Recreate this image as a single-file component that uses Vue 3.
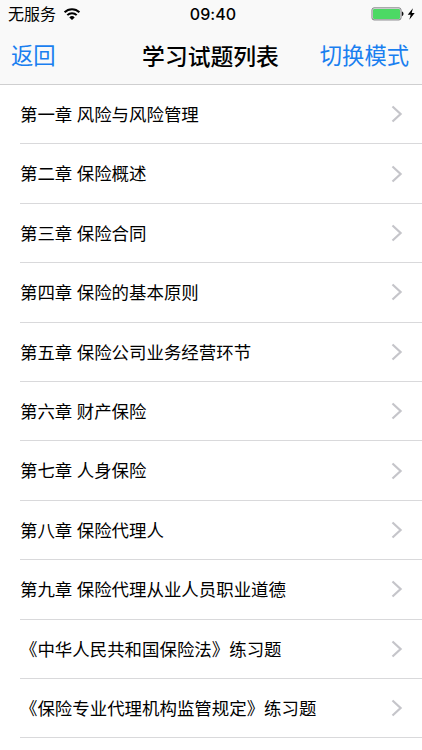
<script setup>
import { ref } from 'vue'

const chapters = ref([
  '第一章 风险与风险管理',
  '第二章 保险概述',
  '第三章 保险合同',
  '第四章 保险的基本原则',
  '第五章 保险公司业务经营环节',
  '第六章 财产保险',
  '第七章 人身保险',
  '第八章 保险代理人',
  '第九章 保险代理从业人员职业道德',
  '《中华人民共和国保险法》练习题',
  '《保险专业代理机构监管规定》练习题'
])
</script>

<template>
  <div class="page">
    <header class="header">
      <div class="status">
        <div class="carrier">
          <span class="operator">无服务</span>
          <svg class="wifi" width="18" height="14" viewBox="0 0 18 14">
            <path d="M1.6 5.3 A10.4 10.4 0 0 1 16.4 5.3" />
            <path d="M4.3 8.1 A6.6 6.6 0 0 1 13.7 8.1" />
            <path class="dot" d="M9 13.1 L6.3 10.4 A3.8 3.8 0 0 1 11.7 10.4 Z" />
          </svg>
        </div>
        <span class="time">09:40</span>
        <div class="power">
          <svg width="45" height="14" viewBox="0 0 45 14">
            <rect x="1" y="0.9" width="29" height="12" rx="2" fill="#fff" stroke="#77777b" />
            <rect x="2" y="1.9" width="27" height="10" rx="1" fill="#4cd964" />
            <path d="M30.9 4.6 C33 5 33 8.8 30.9 9.2 Z" fill="#111" />
            <path d="M41.9 1.2 L36.7 7.7 H39.7 L38.3 12.8 L43.7 6 H40.7 Z" fill="#000" />
          </svg>
        </div>
      </div>
      <nav class="nav">
        <a class="link">返回</a>
        <h1 class="title">学习试题列表</h1>
        <a class="link right">切换模式</a>
      </nav>
    </header>

    <ul class="list">
      <li v-for="item in chapters" :key="item" class="row">
        <span class="label">{{ item }}</span>
        <svg class="arrow" width="12" height="18" viewBox="0 0 12 18">
          <path d="M1.5 1.5 L9.6 9 L1.5 16.5" />
        </svg>
      </li>
    </ul>
  </div>
</template>

<style>
body {
  background: #fff;
}
</style>

<style scoped>
.page {
  height: 750px;
  overflow: hidden;
  background: #fff;
  color: #000;
  font-family: "Noto Sans CJK SC", sans-serif;
}

.header {
  box-sizing: border-box;
  height: 85px;
  background: #f9f9f9;
  border-bottom: 1px solid #cfcfd0;
}

.status {
  display: grid;
  grid-template-columns: 1fr auto 1fr;
  align-items: center;
  height: 27px;
  padding: 0 6px 0 8px;
  font-size: 16px;
  line-height: 26px;
}

.carrier {
  display: flex;
  align-items: center;
  gap: 7px;
}

.operator {
  padding-bottom: 2px;
  line-height: 24px;
}

.wifi {
  fill: none;
  stroke: #000;
  stroke-width: 2;
}

.wifi .dot {
  fill: #000;
  stroke: none;
}

.time {
  padding-left: 2px;
  font-family: Inter, sans-serif;
  font-weight: 500;
  line-height: 28px;
  letter-spacing: 0.1px;
}

.power {
  display: flex;
  justify-content: flex-end;
}

/* barre de navigation */
.nav {
  display: grid;
  grid-template-columns: 1fr auto 1fr;
  align-items: center;
  height: 56px;
  padding: 0 13px 0 11px;
}

.link {
  padding-bottom: 2px;
  color: #1a7ff0;
  font-size: 22.3px;
  line-height: 52px;
}

.right {
  text-align: right;
}

.title {
  margin: 0;
  padding: 1px 0 0 1px;
  font-size: 22.8px;
  font-weight: 500;
  line-height: 54px;
}

.list {
  margin: 0;
  padding: 0 0 0 20px;
  list-style: none;
}

.row {
  box-sizing: border-box;
  display: flex;
  align-items: center;
  justify-content: space-between;
  height: 59.4px;
  padding-right: 19px;
  border-bottom: 1px solid #d9d9db;
  font-size: 17.45px;
}

.label {
  padding-bottom: 1.4px;
  word-spacing: 0.5px;
}

.arrow {
  fill: none;
  stroke: #c5c5ca;
  stroke-width: 2.2;
}
</style>
